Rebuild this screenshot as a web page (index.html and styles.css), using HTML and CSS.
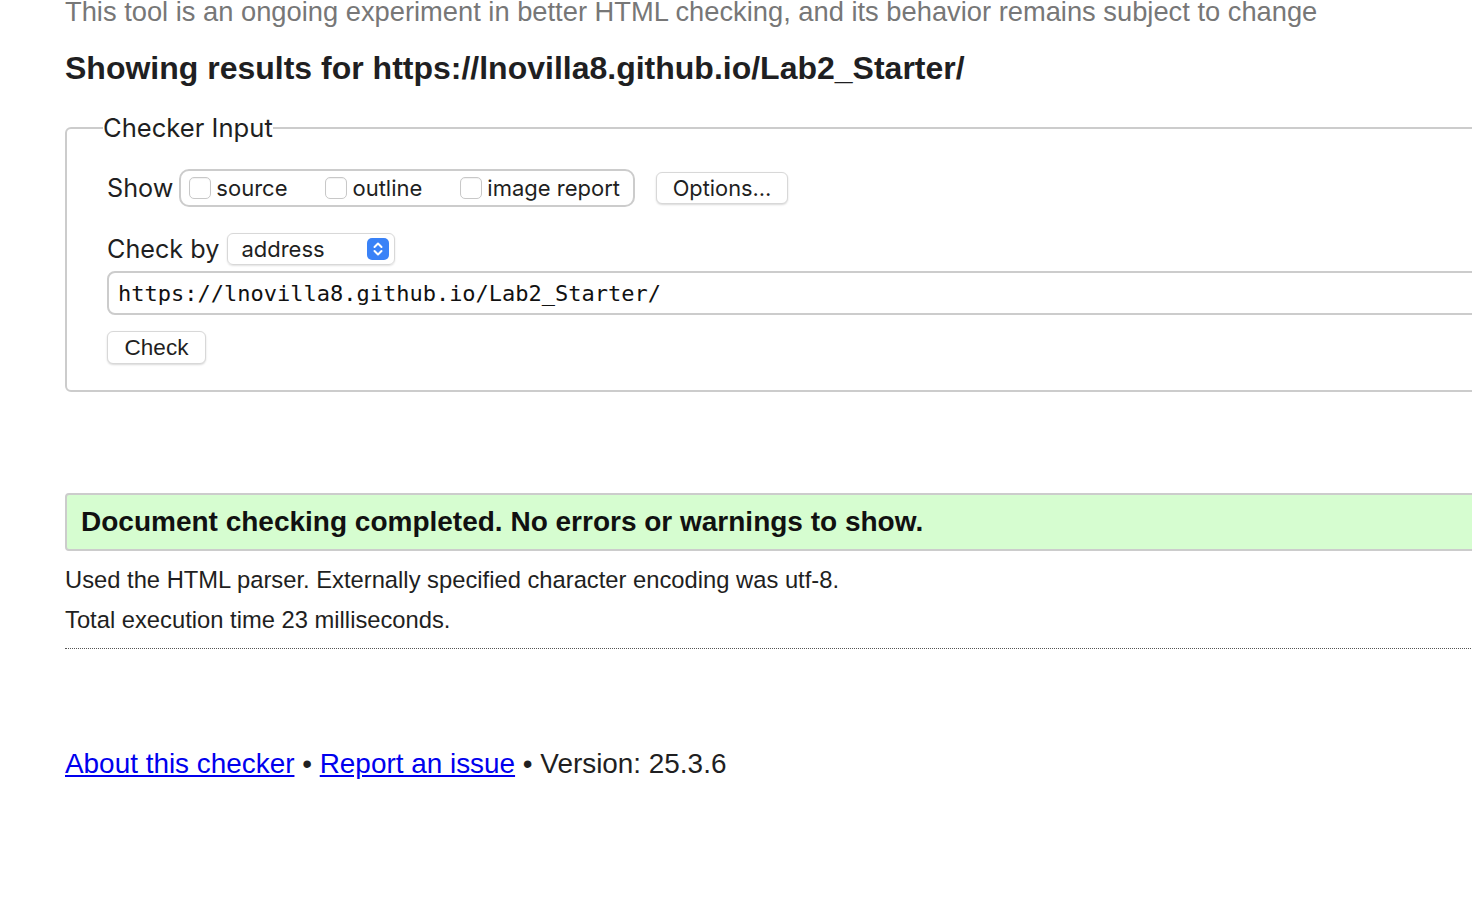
FILE: index.html
```html
<!DOCTYPE html>
<html>
<head>
<meta charset="utf-8">
<title>Nu Html Checker</title>
<link rel="stylesheet" href="styles.css">
</head>
<body>
<div class="page">
  <p class="intro">This tool is an ongoing experiment in better HTML checking, and its behavior remains subject to change</p>
  <h2 class="results">Showing results for https://lnovilla8.github.io/Lab2_Starter/</h2>
  <fieldset class="input">
    <legend>Checker Input</legend>
    <div class="show-row">
      <span class="label">Show</span>
      <div class="checks">
        <label class="check"><span class="box"></span>source</label>
        <label class="check"><span class="box"></span>outline</label>
        <label class="check"><span class="box"></span>image report</label>
      </div>
      <button class="btn options">Options…</button>
    </div>
    <div class="by-row">
      <span class="label">Check by</span>
      <div class="select">
        <span>address</span>
        <span class="arrows"><svg width="22" height="22" viewBox="0 0 22 22"><path d="M7.5 9 L11 5.5 L14.5 9" fill="none" stroke="#fff" stroke-width="2" stroke-linecap="round" stroke-linejoin="round"/><path d="M7.5 13 L11 16.5 L14.5 13" fill="none" stroke="#fff" stroke-width="2" stroke-linecap="round" stroke-linejoin="round"/></svg></span>
      </div>
    </div>
    <div class="url">https://lnovilla8.github.io/Lab2_Starter/</div>
    <button class="btn check-btn">Check</button>
  </fieldset>
  <div class="success">Document checking completed. No errors or warnings to show.</div>
  <p class="info first">Used the HTML parser. Externally specified character encoding was utf-8.</p>
  <p class="info">Total execution time 23 milliseconds.</p>
  <hr class="dots">
  <p class="footer"><a href="#">About this checker</a> • <a href="#">Report an issue</a> • Version: 25.3.6</p>
</div>
</body>
</html>
```
FILE: styles.css
```css
html, body { margin: 0; padding: 0; overflow: hidden; background: #fff; }
body { font-family: "Liberation Sans", Arial, sans-serif; color: #1f1f22; }
.page { width: 1500px; padding-left: 65px; margin-top: -4px; }
.intro { margin: 0; font-size: 27.3px; line-height: 32px; color: #777; }
.results { margin: 20px 0 0; font-size: 32px; font-weight: bold; line-height: 40px; color: #1f1f22; }
.input {
  margin: 24px 0 0; padding: 11px 40px 26px 40px;
  border: 2px solid #ccc; border-radius: 6px;
  font-family: Inter, "Liberation Sans", sans-serif;
}
.input legend { font-size: 25.6px; padding: 0; margin-left: -4px; color: #1f1f22; }
.show-row { display: flex; align-items: center; margin-top: 15px; }
.label { font-size: 25.2px; color: #1f1f22; }
.checks {
  display: flex; align-items: center; gap: 38px;
  margin-left: 6px; padding: 0 13px 0 8px; height: 38px; box-sizing: border-box;
  border: 2px solid #ccc; border-radius: 10px;
}
.check { display: flex; align-items: center; font-size: 22px; color: #1f1f22; }
.box { width: 22px; height: 22px; border: 1px solid #c8c8c8; border-radius: 5px; margin-right: 5px; background: #fff; box-sizing: border-box; box-shadow: inset 0 1px 1px rgba(0,0,0,0.06); }
.btn {
  font-family: Inter, "Liberation Sans", sans-serif; font-size: 21.8px; color: #1f1f22;
  background: #fff; border: 1px solid #d8d8d8; border-radius: 6px;
  box-shadow: 0 1px 2px rgba(0,0,0,0.15); padding: 0;
}
.options { margin-left: 21px; width: 132px; height: 32px; }
.by-row { display: flex; align-items: center; margin-top: 26px; }
.select {
  margin-left: 8px; width: 168px; height: 32px; box-sizing: border-box;
  border: 1px solid #d8d8d8; border-radius: 6px; box-shadow: 0 1px 2px rgba(0,0,0,0.12);
  display: flex; align-items: center; justify-content: space-between;
  padding: 0 5px 0 13px; font-size: 22px; color: #1f1f22;
}
.arrows { width: 22px; height: 22px; background: #3a82f7; border-radius: 5px; display: flex; }
.url {
  margin-top: 6px; margin-right: -200px; height: 44px; box-sizing: border-box;
  border: 2px solid #ccc; border-radius: 8px; padding: 0 9px;
  display: flex; align-items: center;
  font-family: "DejaVu Sans Mono", monospace; font-size: 22px; color: #111;
}
.check-btn { margin-top: 16px; width: 99px; height: 33px; font-family: "Liberation Sans", sans-serif; font-size: 22.5px; }
.success {
  margin-top: 101px; height: 58px; box-sizing: border-box;
  background: #d6fdd0; border: 2px solid #ccc; border-radius: 4px;
  display: flex; align-items: center; padding-left: 14px;
  font-size: 28px; font-weight: bold; color: #111;
}
.info { margin: 0; font-size: 23.75px; line-height: 40px; color: #1f1f22; }
.info.first { margin-top: 9px; }
.dots { margin: 8px 0 0; border: 0; border-top: 1px dotted #555; height: 0; }
.footer { margin: 99px 0 0; font-size: 27.9px; color: #1f1f22; }
.footer a { color: #0000ee; }
```
